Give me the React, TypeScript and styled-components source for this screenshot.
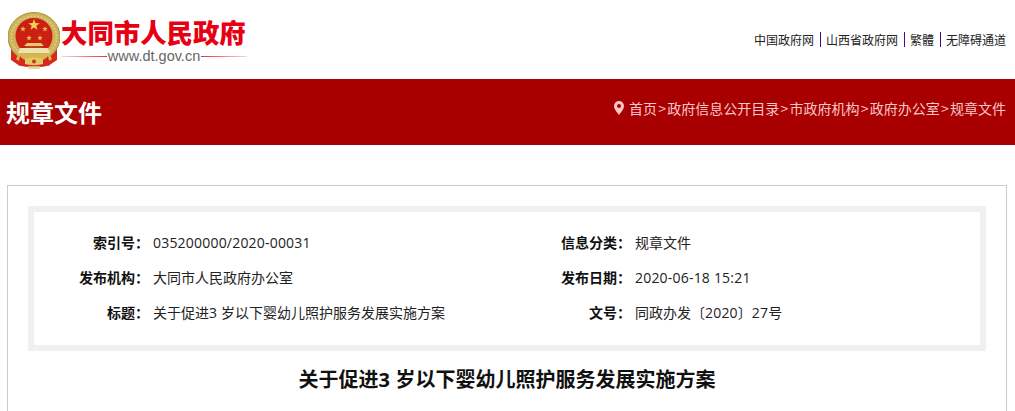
import React from "react";
import styled, { createGlobalStyle } from "styled-components";

const Global = createGlobalStyle`
  html, body { margin: 0; padding: 0; background: #fff; overflow: hidden; }
  body { font-family: "Noto Sans CJK SC", "Liberation Sans", sans-serif; color: #222; }
`;

const Page = styled.div`
  width: 1015px;
  height: 411px;
  overflow: hidden;
`;

const Header = styled.header`
  height: 79px;
  display: flex;
  align-items: flex-start;
  justify-content: space-between;
  padding: 12px 8px 0 8px;
  box-sizing: border-box;
`;

const Brand = styled.div`
  display: flex;
  align-items: flex-start;
`;

const BrandText = styled.div`
  display: flex;
  flex-direction: column;
  margin-left: 1px;
  padding-top: 4px;
  width: 186px;
`;

const BrandName = styled.div`
  font-family: "Noto Sans CJK SC", sans-serif;
  font-weight: 900;
  font-size: 26.4px;
  line-height: 31px;
  color: #e60012;
  white-space: nowrap;
`;

const BrandUrlRow = styled.div`
  display: flex;
  align-items: center;
  gap: 1px;
  margin-top: 1px;
  height: 16px;
`;

const BrandLine = styled.span<{ $dir: string }>`
  flex: 1;
  height: 1px;
  background: linear-gradient(${(p) => p.$dir}, #e8303a, #f8d8d8);
`;

const BrandUrl = styled.span`
  font-family: "Liberation Sans", sans-serif;
  font-size: 14.5px;
  color: #666;
  line-height: 16px;
`;

const TopLinks = styled.nav`
  display: flex;
  align-items: center;
  margin-top: 20px;
  font-size: 12px;
  line-height: 15px;
  color: #222;
`;

const TopLink = styled.a`
  padding: 0 6px 0 5px;
  border-left: 1px solid #4a0a80;
  &:first-child { border-left: 0; }
  &:last-child { padding-right: 1px; }
`;

const Band = styled.div`
  height: 66px;
  background: #a80000;
  display: flex;
  align-items: center;
  justify-content: space-between;
  padding: 0 9px 0 6px;
`;

const BandTitle = styled.h1`
  margin: 0;
  font-size: 24px;
  font-weight: 700;
  color: #fff;
  line-height: 32px;
`;

const Crumbs = styled.div`
  display: flex;
  align-items: center;
  gap: 5px;
  font-size: 14px;
  line-height: 18px;
  color: #f8c8c8;
  margin-bottom: 8px;
`;

const CrumbText = styled.span`
  display: flex;
  white-space: nowrap;
`;

const Sep = styled.span`
  width: 10.25px;
  text-align: center;
`;

const Card = styled.section`
  margin: 40px 8px 0 7px;
  border: 1px solid #ccc;
  border-bottom: 0;
  padding: 20px 20px 0 20px;
  height: 240px;
`;

const Meta = styled.div`
  border: 6px solid #f0f0f0;
  height: 145px;
  box-sizing: border-box;
  display: grid;
  grid-template-columns: 482px 1fr;
  grid-auto-rows: 35px;
  padding-top: 13px;
`;

const Field = styled.div`
  display: flex;
  font-size: 14px;
  line-height: 35px;
`;

const Label = styled.span`
  width: 115px;
  text-align: right;
  font-weight: 700;
  color: #111;
  white-space: nowrap;
`;

const Value = styled.span`
  margin-left: 4px;
  color: #222;
  white-space: nowrap;
`;

const Num = styled.span`
  font-family: "Open Sans", sans-serif;
  letter-spacing: 0.2px;
`;

const DocTitle = styled.h2`
  margin: 14px 0 0;
  text-align: center;
  font-size: 20px;
  line-height: 28px;
  font-weight: 700;
  color: #111;
`;

const Pin = () => (
  <svg width="10" height="14" viewBox="0 0 10 14">
    <path
      fillRule="evenodd"
      fill="#f8c8c8"
      d="M5 0a5 5 0 0 1 5 5c0 3.200-3.300 6.800-5 9-1.700-2.200-5-5.800-5-9a5 5 0 0 1 5-5zm0 3a2 2 0 1 0 0 4 2 2 0 0 0 0-4z"
    />
  </svg>
);

const star = (cx: number, cy: number, r: number) => {
  const pts: string[] = [];
  for (let i = 0; i < 10; i++) {
    const a = -Math.PI / 2 + (i * Math.PI) / 5;
    const rr = i % 2 ? r * 0.4 : r;
    pts.push(`${(cx + rr * Math.cos(a)).toFixed(2)},${(cy + rr * Math.sin(a)).toFixed(2)}`);
  }
  return pts.join(" ");
};

const Emblem = () => (
  <svg width="52" height="58" viewBox="0 0 52 58" style={{ flex: "none", filter: "blur(0.3px)" }}>
    <path d="M3 36l9 7v11l-9-6zM49 36l-9 7v11l9-6z" fill="#d8281c" />
    <ellipse cx="26" cy="25" rx="26" ry="24.500" fill="#cdb35a" />
    <ellipse cx="26" cy="25" rx="26" ry="24.500" fill="none" stroke="#a8903c" strokeWidth="1" />
    <ellipse cx="26" cy="25" rx="22.500" ry="21" fill="none" stroke="#e2d08a" strokeWidth="1.500" strokeDasharray="2 1.500" />
    <path d="M26 6c10.500 0 18.500 8 18.500 18 0 5-2 9.500-5 13H12.500c-3-3.500-5-8-5-13C7.500 14 15.500 6 26 6z" fill="#cc1f14" />
    <polygon points={star(26, 13, 6)} fill="#f2cf55" />
    <polygon points={star(15, 17, 3)} fill="#e8c050" />
    <polygon points={star(21, 26, 3)} fill="#e8c050" />
    <polygon points={star(32, 26, 3)} fill="#e8c050" />
    <polygon points={star(37, 17, 3)} fill="#e8c050" />
    <path d="M19 31h14l3 3H16z" fill="#e8c868" />
    <path d="M18 34h16v2H18z" fill="#b8401c" />
    <path d="M12 36h28l2 5H10z" fill="#f0e2b0" />
    <path d="M11 41c8 3 22 3 30 0l3 6c-6 6-30 6-36 0z" fill="#d8b84c" />
    <path d="M12 44c4 7 24 7 28 0l2 9c-8 3-24 3-32 0z" fill="#d6281c" />
    <path d="M17 47c5-2 13-2 18 0v5c-5 1.500-13 1.500-18 0z" fill="#e4c868" />
    <circle cx="26" cy="49.500" r="2" fill="#c43a20" />
    <path d="M20 54h12v3H20z" fill="#e4d08a" opacity="0.8" />
  </svg>
);

const withNums = (s: string) =>
  s.split(/([^\u3000-\u9fff\uff00-\uffef]+)/).map((part, i) => (i % 2 ? <Num key={i}>{part}</Num> : part));

const rows: [string, string, string, string][] = [
  ["索引号：", "035200000/2020-00031", "信息分类：", "规章文件"],
  ["发布机构：", "大同市人民政府办公室", "发布日期：", "2020-06-18 15:21"],
  ["标题：", "关于促进3 岁以下婴幼儿照护服务发展实施方案", "文号：", "同政办发〔2020〕27号"],
];

const crumbs = ["首页", "政府信息公开目录", "市政府机构", "政府办公室", "规章文件"];

export default function App() {
  return (
    <Page>
      <Global />
      <Header>
        <Brand>
          <Emblem />
          <BrandText>
            <BrandName>大同市人民政府</BrandName>
            <BrandUrlRow>
              <BrandLine $dir="to left" />
              <BrandUrl>www.dt.gov.cn</BrandUrl>
              <BrandLine $dir="to right" />
            </BrandUrlRow>
          </BrandText>
        </Brand>
        <TopLinks>
          <TopLink>中国政府网</TopLink>
          <TopLink>山西省政府网</TopLink>
          <TopLink>繁體</TopLink>
          <TopLink>无障碍通道</TopLink>
        </TopLinks>
      </Header>
      <Band>
        <BandTitle>规章文件</BandTitle>
        <Crumbs>
          <Pin />
          <CrumbText>
            {crumbs.map((c, i) => (
              <React.Fragment key={c}>
                {i > 0 && <Sep>&gt;</Sep>}
                {c}
              </React.Fragment>
            ))}
          </CrumbText>
        </Crumbs>
      </Band>
      <Card>
        <Meta>
          {rows.map((r) => (
            <React.Fragment key={r[0]}>
              <Field>
                <Label>{r[0]}</Label>
                <Value>{withNums(r[1])}</Value>
              </Field>
              <Field>
                <Label>{r[2]}</Label>
                <Value>{withNums(r[3])}</Value>
              </Field>
            </React.Fragment>
          ))}
        </Meta>
        <DocTitle>{withNums("关于促进3 岁以下婴幼儿照护服务发展实施方案")}</DocTitle>
      </Card>
    </Page>
  );
}
